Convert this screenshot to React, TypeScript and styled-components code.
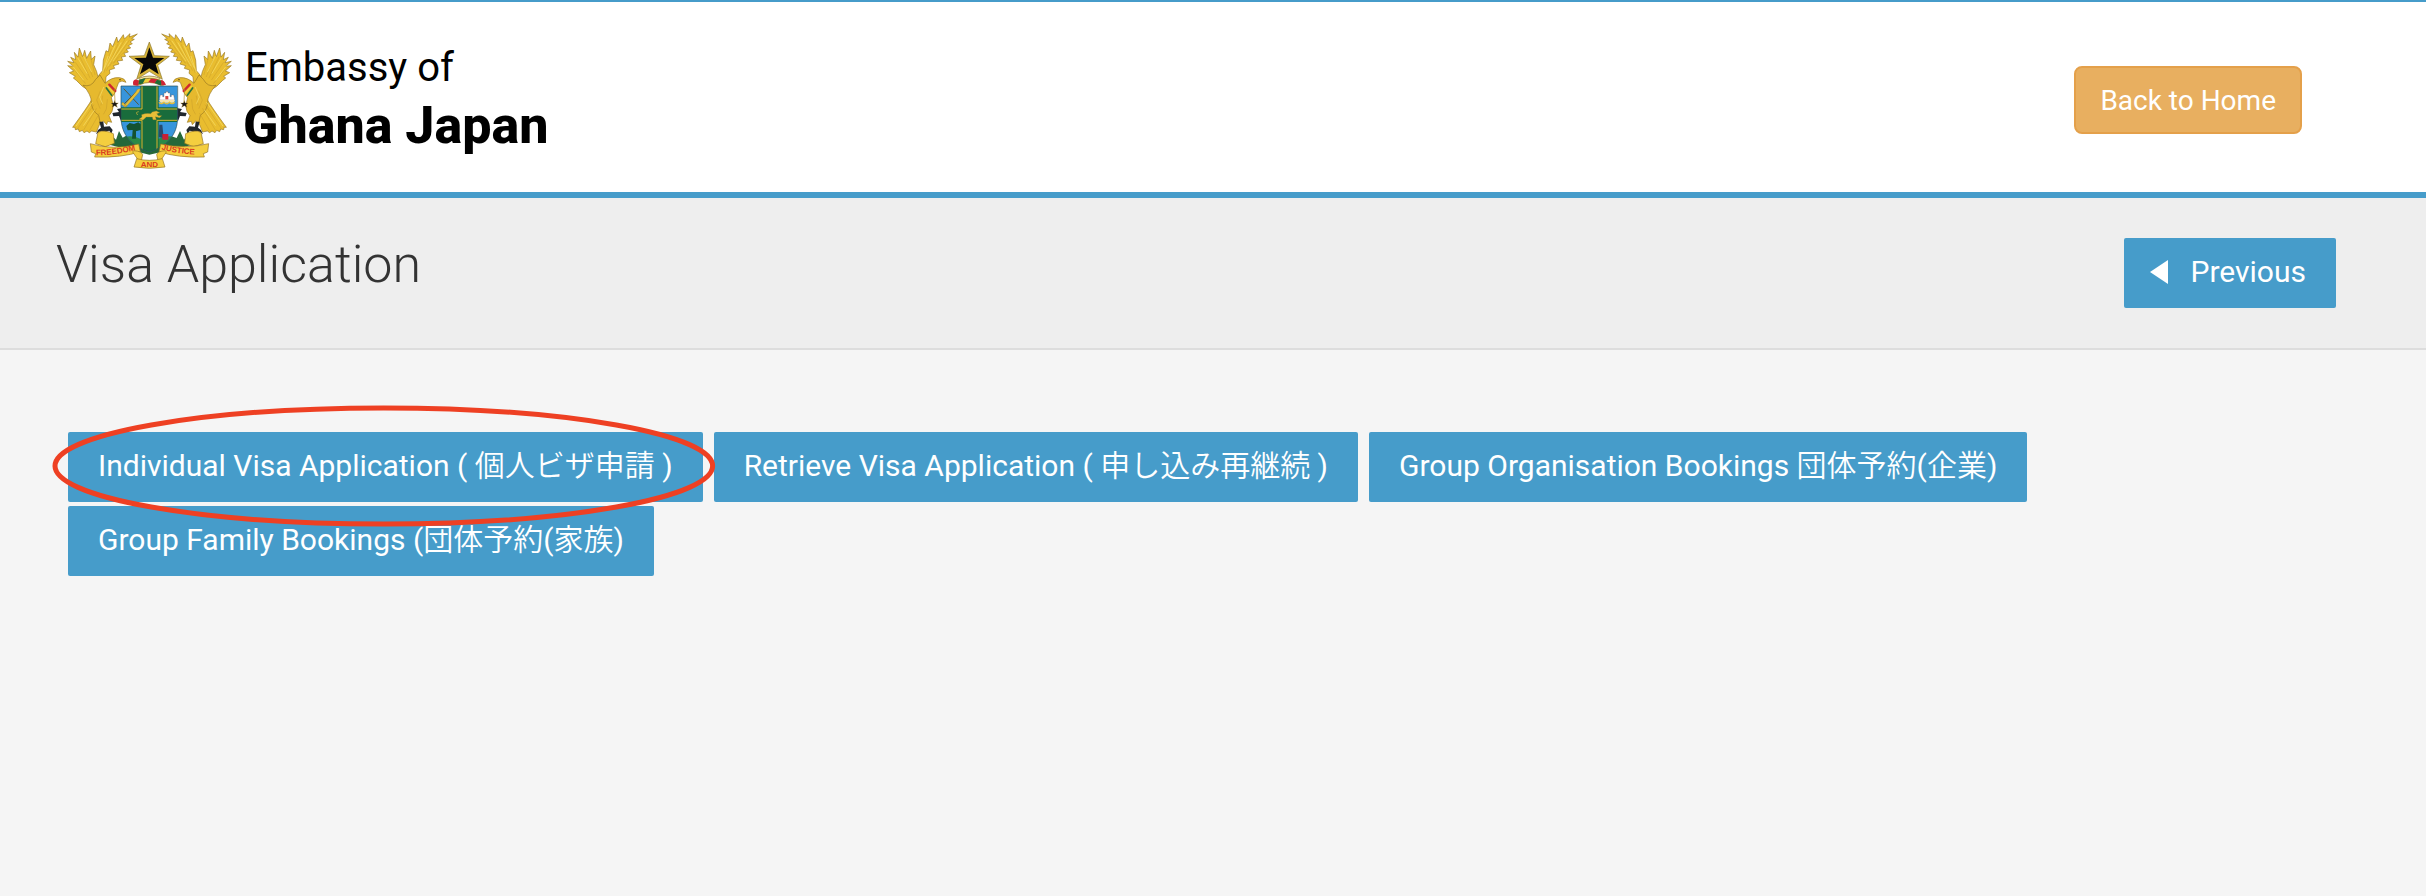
import React from "react";
import styled, { createGlobalStyle } from "styled-components";

const BLUE = "#469cca";

const GlobalStyle = createGlobalStyle`
  *, *::before, *::after { box-sizing: border-box; }
  body {
    margin: 0;
    background: #f5f5f5;
    color: #333;
    font-family: Roboto, "Noto Sans CJK JP", sans-serif;
  }
`;

const Header = styled.header`
  display: flex;
  align-items: flex-start;
  justify-content: space-between;
  min-height: 198px;
  padding: 30px 124px 20px 66px;
  background: #fff;
  border-top: 2px solid ${BLUE};
  border-bottom: 6px solid ${BLUE};
`;

const Brand = styled.a`
  display: flex;
  align-items: flex-start;
  gap: 10px;
  color: #000;
  text-decoration: none;
`;

const BrandText = styled.span`
  display: flex;
  flex-direction: column;
  padding-top: 10px;
  white-space: nowrap;
`;

const BrandTop = styled.span`
  padding-left: 2px;
  font-size: 40px;
  line-height: 52px;
`;

const BrandName = styled.span`
  font-size: 52px;
  font-weight: 800;
  line-height: 64px;
`;

const HomeButton = styled.button`
  margin-top: 34px;
  padding: 2px 24px 0;
  height: 68px;
  border: 2px solid #e4a04a;
  border-radius: 8px;
  background: #e8af60;
  color: #fff;
  font: 400 28px/40px Roboto, sans-serif;
  white-space: nowrap;
  cursor: pointer;
`;

const TitleBar = styled.div`
  display: flex;
  align-items: flex-start;
  justify-content: space-between;
  min-height: 152px;
  padding: 36px 90px 40px 56px;
  background: #eee;
  border-bottom: 2px solid #ddd;
`;

const Title = styled.h1`
  margin: 0;
  font-size: 52px;
  font-weight: 300;
  line-height: 62px;
`;

const ActionButton = styled.button`
  display: inline-flex;
  align-items: center;
  height: 70px;
  padding: 0 30px 2px;
  border: 0;
  border-radius: 2px;
  background: ${BLUE};
  color: #fff;
  font: 400 30px/40px Roboto, "Noto Sans CJK JP DemiLight", "Noto Sans CJK JP Light", "Noto Sans CJK JP", sans-serif;
  white-space: nowrap;
  cursor: pointer;
`;

const PreviousButton = styled(ActionButton)`
  gap: 23px;
  margin-top: 4px;
  padding-left: 26px;
`;

const Actions = styled.main`
  display: flex;
  flex-wrap: wrap;
  gap: 4px 11px;
  padding: 82px 68px;
`;

const Highlighted = styled.div`
  position: relative;
  display: flex;
`;

const Ring = styled.svg`
  position: absolute;
  left: -16px;
  top: -27px;
  width: calc(100% + 29px);
  height: 122px;
  overflow: visible;
  pointer-events: none;
  z-index: 1;

  ellipse {
    fill: none;
    stroke: #ee4023;
    stroke-width: 5px;
    rx: calc(50% - 3px);
    ry: 58px;
  }
`;

const GOLD = "#e9bd2f";
const EDGE = "#9a7822";

function Eagle() {
  return (
    <g strokeLinejoin="round" strokeLinecap="round">
      <path
        d="M132 196 L118 212 L97 199 L80 182 L70 174 L76 169 L58 158 L71 153 L53 137 L70 139 L53 124 L72 128 L62 112 L77 119 L73 97 L84 111 L88 84 L98 110 L104 91 L110 115 L122 93 L124 118 L135 108 L131 134 L140 155 L146 180 Z"
        fill={GOLD} stroke={EDGE} strokeWidth="2"
      />
      <path
        d="M144 204 L146 166 L158 152 L160 120 L168 92 L175 96 L180 69 L188 80 L200 51 L204 67 L220 44 L223 57 L240 41 L238 51 L262 42 L245 56 L253 58 L240 66 L247 71 L235 77 L242 84 L229 88 L235 96 L222 100 L227 109 L214 111 L218 121 L202 123 L207 132 L190 137 L194 145 L178 150 L180 160 L168 170 L166 196 Z"
        fill={GOLD} stroke={EDGE} strokeWidth="2"
      />
      <path
        d="M126 238 Q112 262 68 322 L75 322 L76 329 L85 327 L88 335 L97 331 L102 338 L111 333 L118 338 L125 333 L139 336 L153 303 L164 282 Z"
        fill={GOLD} stroke={EDGE} strokeWidth="2"
      />
      <path
        d="M100 196 Q124 203 137 178 L150 165 L165 190 Q184 171 209 173 Q224 174 228 187 L216 183 L206 187 L200 203 Q196 222 184 233 L190 257 Q188 277 177 287 L185 307 L173 304 L170 314 L160 303 L151 310 L146 286 Q124 271 124 245 Q124 225 100 196Z"
        fill="#e6b92e" stroke={EDGE} strokeWidth="2"
      />
      <path
        d="M77 128 L112 179 M72 148 L106 190 M90 111 L120 174 M108 121 L128 170 M123 118 L135 164 M184 87 L162 157 M204 72 L170 151 M223 61 L179 139 M238 61 L191 129 M236 82 L190 130 M131 255 L84 324 M139 266 L101 330 M148 280 L119 331 M151 213 L140 240 L150 265 M158 228 L153 255 M172 239 L169 267 L161 282"
        fill="none" stroke="#b98f26" strokeWidth="1"
      />
      <path
        d="M67 137 L100 180 M84 115 L111 160 M101 109 L124 155 M174 109 L158 157 M195 77 L164 144 M213 68 L174 138 M231 63 L189 123 M127 247 L79 317 M133 271 L101 316 M161 202 L149 231 L157 250"
        fill="none" stroke="#f8e06a" strokeWidth="2"
      />
      <path d="M178 194 L196 213" stroke="#cf2730" strokeWidth="7" />
      <path d="M173 199 L191 219" stroke="#f4d43c" strokeWidth="4" />
      <path d="M169 204 L185 226" stroke="#28743c" strokeWidth="5" />
      <path d="M193 207 L195 244" stroke="#b08c2a" strokeWidth="2" />
      <circle cx="210" cy="179" r="2" fill="#2b2414" />
      <path d="M194 242 L197 249 L205 249 L199 254 L202 262 L194 257 L186 262 L189 254 L183 249 L191 249Z" fill="#171717" stroke="#b08c2a" strokeWidth="1" />
      <path d="M187 279 L207 276 L201 267 L222 263 L231 268 L220 278 L226 286 L218 288 L213 303 L207 288 L190 289Z" fill="#20262c" />
      <path d="M148 305 L160 305 L162 320 L179 319 L188 330 L184 341 L178 332 L170 334 L165 343 L158 333 L149 335 L138 343 L144 330 L153 323Z" fill="#20262c" />
    </g>
  );
}

function CoatOfArms() {
  return (
    <svg width="167" height="137" viewBox="48 36 501 411" aria-hidden="true">
      <defs>
        <clipPath id="shield">
          <path d="M213 198 H383 V290 C383 347 349 379 298 396 C247 379 213 347 213 290Z" />
        </clipPath>
        <path id="curve-left" d="M138 406 Q193 406 267 388" />
        <path id="curve-right" d="M334 388 Q392 404 459 404" />
      </defs>

      <path d="M178 374 L190 352 L198 359 L207 333 L218 353 L232 345 L298 368 L360 347 L380 354 L390 333 L402 359 L410 350 L422 376 L298 404Z" fill="#25683a" />
      <Eagle />
      <g transform="translate(597 0) scale(-1 1)"><Eagle /></g>

      <g clipPath="url(#shield)">
        <path d="M213 198 H383 V398 H213Z" fill="#3795dc" />
        <path d="M213 354 Q245 342 274 358 V398 H213Z M322 357 Q360 342 383 355 V398 H322Z" fill="#2b8a48" />
        <path d="M246 356 L248 330 L233 331 L229 318 L239 309 L252 312 L265 307 L276 316 L274 329 L258 334 L258 356Z" fill="#145231" />
        <path d="M326 352 L328 314 H337 L341 354Z" fill="#274b6e" />
        <path d="M337 342 H355 V359 H337Z" fill="#c91f35" />
        <path d="M271 198 H326 V262 H383 V306 H326 V398 H271 V306 H213 V262 H271Z" fill="#196c3c" />
        <path d="M276 198 V267 H213 M321 198 V267 H383 M213 301 H276 V398 M383 301 H321 V398" fill="none" stroke="#d9b431" strokeWidth="3" />
      </g>
      <path d="M213 198 H383 V290 C383 347 349 379 298 396 C247 379 213 347 213 290Z" fill="none" stroke="#264b56" strokeWidth="2" />

      <path d="M221 206 L266 254 M222 252 L267 207" stroke="#5b5832" strokeWidth="3" />
      <path d="M222 257 L257 216 L263 207 L272 206 L267 217 L229 260Z M218 246 L230 258 L225 262 L214 253Z" fill="#e7bf38" stroke="#7d6a22" strokeWidth="1" />
      <path d="M329 235 L331 225 H338 V230 H342 V219 H348 V215 H354 V219 H360 V230 H364 V225 H371 L374 240 H329Z" fill="#fff" stroke="#7c4e46" strokeWidth="1" />
      <path d="M346 228 H355 V238 H346Z" fill="#d54642" />
      <path d="M327 240 H375 L371 248 H332Z" fill="#f4e5b1" />
      <path d="M327 247 Q334 255 342 247 Q350 256 358 247 Q366 255 374 247" fill="none" stroke="#e8bf38" strokeWidth="4" />

      <path d="M263 285 Q255 276 266 275" fill="none" stroke="#e8bf38" strokeWidth="2" />
      <path d="M267 298 L276 291 L275 284 Q287 279 302 281 L307 276 L319 273 L329 278 L320 281 L325 287 L335 287 L329 293 L316 290 L319 299 L309 299 L307 291 L289 291 L279 300Z" fill="#e8bf38" stroke="#af8524" strokeWidth="1" />

      <path d="M266 175 Q298 161 330 175 L325 181 Q298 171 273 182Z" fill="#f3e5a1" stroke="#8b7632" strokeWidth="2" />
      <path d="M257 195 Q252 181 266 181 Q298 169 332 181 Q345 183 340 196 L328 194 Q298 181 270 194Z" fill="#f0cf3a" stroke="#81651e" strokeWidth="2" />
      <path d="M250 196 Q246 180 258 178 L267 183 L265 197Z M303 176 L323 178 L314 190 L295 186Z M332 181 Q342 178 348 195 L334 196Z" fill="#cf2435" />
      <path d="M268 179 L287 174 L278 191 L265 193Z M321 179 L333 182 L334 197 L314 189Z" fill="#216b39" />
      <path d="M298 66 L313 107 L358 109 L323 136 L337 178 L298 154 L260 178 L273 136 L237 109 L283 107Z" fill="#d9b53b" stroke="#8a752c" strokeWidth="2" />
      <path d="M298 82 L309 113 L343 114 L317 133 L326 163 L298 145 L270 163 L280 133 L253 114 L288 113Z" fill="#080808" />

      <g fill="#f4ce3f" stroke="#947323" strokeWidth="2" strokeLinejoin="round">
        <path d="M144 337 Q164 328 190 341 L193 370 L166 380 L137 371Z" />
        <path d="M453 337 Q433 328 407 341 L404 370 L431 380 L460 371Z" />
        <path d="M121 371 Q187 392 266 372 L271 395 Q215 414 134 411 L137 401 L124 396Z" />
        <path d="M476 371 Q407 388 332 372 L327 395 Q383 414 463 411 L460 401 L473 396Z" />
        <path d="M251 392 Q276 394 278 404 L272 431 L248 396Z M346 392 Q322 394 320 404 L326 431 L349 396Z" />
        <path d="M260 416 Q298 426 337 416 L345 441 Q298 449 252 441Z" />
      </g>
      <g fill="#da3c20" fontFamily="Liberation Sans, sans-serif" fontSize="24" fontWeight="700">
        <text><textPath href="#curve-left">FREEDOM</textPath></text>
        <text><textPath href="#curve-right">JUSTICE</textPath></text>
        <text x="298" y="441" textAnchor="middle">AND</text>
      </g>
    </svg>
  );
}

function BackArrow() {
  return (
    <svg width="18" height="24" viewBox="0 0 18 24" aria-hidden="true">
      <path d="M0 12 L18 0 V24Z" fill="currentColor" />
    </svg>
  );
}

export default function App() {
  return (
    <>
      <GlobalStyle />
      <Header>
        <Brand href="#">
          <CoatOfArms />
          <BrandText>
            <BrandTop>Embassy of</BrandTop>
            <BrandName>Ghana Japan</BrandName>
          </BrandText>
        </Brand>
        <HomeButton type="button">Back to Home</HomeButton>
      </Header>
      <TitleBar>
        <Title>Visa Application</Title>
        <PreviousButton type="button">
          <BackArrow />
          Previous
        </PreviousButton>
      </TitleBar>
      <Actions lang="ja">
        <Highlighted>
          <ActionButton type="button">Individual Visa Application ( 個人ビザ申請 )</ActionButton>
          <Ring aria-hidden="true">
            <ellipse cx="50%" cy="50%" />
          </Ring>
        </Highlighted>
        <ActionButton type="button">Retrieve Visa Application ( 申し込み再継続 )</ActionButton>
        <ActionButton type="button">Group Organisation Bookings 団体予約(企業)</ActionButton>
        <ActionButton type="button">Group Family Bookings (団体予約(家族)</ActionButton>
      </Actions>
    </>
  );
}
